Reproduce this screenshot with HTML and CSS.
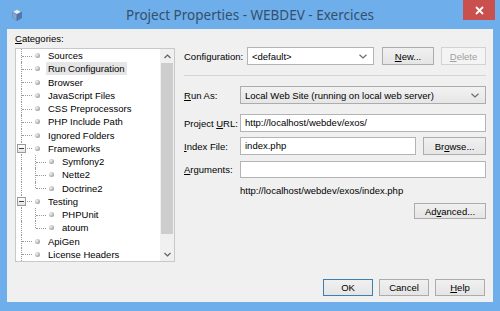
FILE: index.html
```html
<!DOCTYPE html>
<html lang="en">
<head>
    <meta charset="UTF-8">
    <title>Project Properties - WEBDEV - Exercices</title>
    <link rel="stylesheet" href="styles.css">
</head>
<body>
    <div class="window">
        <div class="titlebar">
            <svg class="app-icon" width="10" height="12" viewBox="0 0 10 12">
                <polygon points="5,0.5 9.5,3 5,5.5 0.5,3" fill="#e6eef8" stroke="#8da6c4" stroke-width="0.6"/>
                <polygon points="0.5,3 5,5.5 5,11.5 0.5,9" fill="#7ea6d6" stroke="#6a86aa" stroke-width="0.6"/>
                <polygon points="9.5,3 5,5.5 5,11.5 9.5,9" fill="#4f79b4" stroke="#4c6a94" stroke-width="0.6"/>
            </svg>
            <div class="title">Project Properties - WEBDEV - Exercices</div>
            <div class="close">
                <svg width="9" height="9" viewBox="0 0 9 9"><path d="M1 1 L8 8 M8 1 L1 8" stroke="#fff" stroke-width="1.8"/></svg>
            </div>
        </div>
        <div class="client">
            <div class="main">
                <div class="categories">
                    <div class="cat-label"><u>C</u>ategories:</div>
                    <div class="tree">
                        <div class="tree-list">
                            <div class="row"><span class="ind tee"></span><span class="bullet"></span><span class="lbl">Sources</span></div>
                            <div class="row"><span class="ind tee"></span><span class="bullet"></span><span class="lbl selected">Run Configuration</span></div>
                            <div class="row"><span class="ind tee"></span><span class="bullet"></span><span class="lbl">Browser</span></div>
                            <div class="row"><span class="ind tee"></span><span class="bullet"></span><span class="lbl">JavaScript Files</span></div>
                            <div class="row"><span class="ind tee"></span><span class="bullet"></span><span class="lbl">CSS Preprocessors</span></div>
                            <div class="row"><span class="ind tee"></span><span class="bullet"></span><span class="lbl">PHP Include Path</span></div>
                            <div class="row"><span class="ind tee"></span><span class="bullet"></span><span class="lbl">Ignored Folders</span></div>
                            <div class="row"><span class="ind tee"><span class="toggle"></span></span><span class="bullet"></span><span class="lbl">Frameworks</span></div>
                            <div class="row"><span class="ind pass"></span><span class="ind tee"></span><span class="bullet"></span><span class="lbl">Symfony2</span></div>
                            <div class="row"><span class="ind pass"></span><span class="ind tee"></span><span class="bullet"></span><span class="lbl">Nette2</span></div>
                            <div class="row"><span class="ind pass"></span><span class="ind elbow"></span><span class="bullet"></span><span class="lbl">Doctrine2</span></div>
                            <div class="row"><span class="ind tee"><span class="toggle"></span></span><span class="bullet"></span><span class="lbl">Testing</span></div>
                            <div class="row"><span class="ind pass"></span><span class="ind tee"></span><span class="bullet"></span><span class="lbl">PHPUnit</span></div>
                            <div class="row"><span class="ind pass"></span><span class="ind elbow"></span><span class="bullet"></span><span class="lbl">atoum</span></div>
                            <div class="row"><span class="ind tee"></span><span class="bullet"></span><span class="lbl">ApiGen</span></div>
                            <div class="row"><span class="ind tee"></span><span class="bullet"></span><span class="lbl">License Headers</span></div>
                        </div>
                        <div class="scrollbar">
                            <div class="sb-btn">
                                <svg width="7" height="5" viewBox="0 0 7 5"><path d="M0.5 4 L3.5 1 L6.5 4" fill="none" stroke="#606060" stroke-width="1.2"/></svg>
                            </div>
                            <div class="sb-track"><div class="sb-thumb"></div></div>
                            <div class="sb-btn">
                                <svg width="7" height="5" viewBox="0 0 7 5"><path d="M0.5 1 L3.5 4 L6.5 1" fill="none" stroke="#606060" stroke-width="1.2"/></svg>
                            </div>
                        </div>
                    </div>
                </div>

                <div class="panel">
                    <div class="form-row config-row">
                        <span class="label config-label">Configuration:</span>
                        <div class="combo editable config-combo">
                            <span class="combo-text">&lt;default&gt;</span>
                            <svg class="arrow" width="8" height="5" viewBox="0 0 8 5"><path d="M0.5 0.8 L4 4 L7.5 0.8" fill="none" stroke="#6a6a6a" stroke-width="1.2"/></svg>
                        </div>
                        <button class="btn new-btn"><u>N</u>ew...</button>
                        <button class="btn delete-btn" disabled><u>D</u>elete</button>
                    </div>
                    <div class="separator"></div>
                    <div class="form-row">
                        <span class="label"><u>R</u>un As:</span>
                        <div class="combo grow">
                            <span class="combo-text">Local Web Site (running on local web server)</span>
                            <svg class="arrow" width="8" height="5" viewBox="0 0 8 5"><path d="M0.5 0.8 L4 4 L7.5 0.8" fill="none" stroke="#6a6a6a" stroke-width="1.2"/></svg>
                        </div>
                    </div>
                    <div class="form-row url-row">
                        <span class="label">Project <u>U</u>RL:</span>
                        <div class="field grow">http://localhost/webdev/exos/</div>
                    </div>
                    <div class="form-row">
                        <span class="label"><u>I</u>ndex File:</span>
                        <div class="field grow">index.php</div>
                        <button class="btn browse-btn">Br<u>o</u>wse...</button>
                    </div>
                    <div class="form-row">
                        <span class="label"><u>A</u>rguments:</span>
                        <div class="field grow short"></div>
                    </div>
                    <div class="full-url">http://localhost/webdev/exos/index.php</div>
                    <div class="adv-row">
                        <button class="btn adv-btn">Ad<u>v</u>anced...</button>
                    </div>
                </div>
            </div>
            <div class="buttons">
                <button class="btn dlg-btn default">OK</button>
                <button class="btn dlg-btn">Cancel</button>
                <button class="btn dlg-btn"><u>H</u>elp</button>
            </div>
        </div>
    </div>
</body>
</html>
```

FILE: styles.css
```css
body {
    margin: 0;
    font-family: "Liberation Sans", Arial, sans-serif;
    font-size: 9.5px;
    color: #000;
}
.window {
    width: 500px;
    height: 311px;
    background: #6eaeea;
    display: flex;
    flex-direction: column;
    box-sizing: border-box;
    padding-bottom: 9px;
}
.titlebar {
    height: 29px;
    display: grid;
    grid-template-columns: 1fr auto 1fr;
    align-items: center;
}
.app-icon {
    margin-left: 12px;
    margin-top: 1px;
}
.title {
    font-family: "Noto Sans", "Open Sans", sans-serif;
    font-size: 13.5px;
    color: #34506c;
    margin-top: 1px;
}
.close {
    justify-self: end;
    align-self: start;
    width: 32px;
    height: 20px;
    margin-right: 5px;
    background: #c9504d;
    display: flex;
    align-items: center;
    justify-content: center;
}
.client {
    flex: 1;
    margin: 0 7px;
    background: #f0f0f0;
    display: flex;
    flex-direction: column;
}
.main {
    flex: 1;
    display: flex;
    padding: 3px 7px 0 8px;
    gap: 9px;
}
.categories {
    width: 160px;
}
.cat-label {
    height: 13px;
    line-height: 13px;
    margin-bottom: 3px;
}
.tree {
    height: 214px;
    box-sizing: border-box;
    border: 1px solid #c8c8c8;
    background: #fff;
    display: flex;
    overflow: hidden;
}
.tree-list {
    flex: 1;
}
.row {
    height: 13.25px;
    display: flex;
    align-items: center;
    white-space: nowrap;
}
.ind {
    width: 14px;
    height: 100%;
    position: relative;
    flex: none;
}
.ind::before {
    content: "";
    position: absolute;
    left: 5px;
    top: 0;
    bottom: 0;
    border-left: 1px dotted #9a9a9a;
}
.tee::after,
.elbow::after {
    content: "";
    position: absolute;
    left: 6px;
    right: -2px;
    top: 50%;
    border-top: 1px dotted #9a9a9a;
}
.elbow::before {
    bottom: 50%;
}
.toggle {
    position: absolute;
    left: 1px;
    top: 2px;
    width: 7px;
    height: 7px;
    border: 1px solid #9a9a9a;
    background: linear-gradient(#ffffff, #e4e4e4);
    z-index: 1;
}
.toggle::after {
    content: "";
    position: absolute;
    left: 1px;
    right: 1px;
    top: 3px;
    height: 1px;
    background: #404040;
}
.bullet {
    width: 14px;
    height: 100%;
    flex: none;
    display: flex;
    align-items: center;
    justify-content: center;
}
.bullet::before {
    content: "";
    width: 5px;
    height: 5px;
    border-radius: 50%;
    background: radial-gradient(circle at 35% 35%, #f4f4f4, #b0b0b0 60%, #828282);
}
.lbl {
    margin-left: 2px;
    padding: 0 2px;
    line-height: 13px;
}
.selected {
    background: #e6e6e6;
}
.scrollbar {
    width: 14px;
    flex: none;
    display: flex;
    flex-direction: column;
    background: #f0f0f0;
}
.sb-btn {
    height: 14px;
    display: flex;
    align-items: center;
    justify-content: center;
}
.sb-track {
    flex: 1;
}
.sb-thumb {
    height: 171px;
    margin: 0 1px;
    background: #cdcdcd;
}
.panel {
    flex: 1;
    padding-top: 15px;
    display: flex;
    flex-direction: column;
}
.form-row {
    display: flex;
    align-items: center;
    height: 18px;
    margin-bottom: 5px;
}
.config-row {
    margin-bottom: 0;
}
.label {
    width: 56px;
    flex: none;
}
.config-label {
    width: 63px;
}
.grow {
    flex: 1;
}
.combo {
    height: 18px;
    box-sizing: border-box;
    border: 1px solid #acacac;
    background: linear-gradient(#f2f2f2, #e6e6e6);
    display: flex;
    align-items: center;
    padding: 0 6px 0 4px;
}
.combo.editable {
    background: #fff;
    border-color: #b4b4b4;
}
.config-combo {
    width: 127px;
    flex: none;
    margin-right: 8px;
}
.combo-text {
    flex: 1;
}
.arrow {
    flex: none;
}
.field {
    height: 18px;
    box-sizing: border-box;
    border: 1px solid #b4b4b4;
    background: #fff;
    line-height: 16px;
    padding-left: 4px;
}
.field.short {
    height: 17px;
}
.btn {
    font-family: "Liberation Sans", Arial, sans-serif;
    font-size: 9.5px;
    color: #000;
    height: 18px;
    box-sizing: border-box;
    border: 1px solid #acacac;
    background: linear-gradient(#f0f0f0, #e5e5e5);
    padding: 0;
    margin: 0;
}
.new-btn {
    width: 52px;
    margin-right: 7px;
}
.delete-btn {
    width: 45px;
    color: #a0a0a0;
    border-color: #d2d2d2;
    background: #f4f4f4;
}
.separator {
    height: 1px;
    background: #d5d5d5;
    margin: 10px 0 10px;
}
.url-row {
    margin-top: 5px;
}
.browse-btn {
    width: 63px;
    margin-left: 7px;
}
.full-url {
    margin: 1px 0 0 56px;
    line-height: 13px;
}
.adv-row {
    display: flex;
    justify-content: flex-end;
    margin-top: 6px;
}
.adv-btn {
    width: 72px;
    height: 16px;
}
.buttons {
    display: flex;
    justify-content: flex-end;
    gap: 6px;
    padding: 0 8px 6px 0;
}
.dlg-btn {
    width: 50px;
    height: 17px;
}
.default {
    border-color: #3c7fb1;
}
```
